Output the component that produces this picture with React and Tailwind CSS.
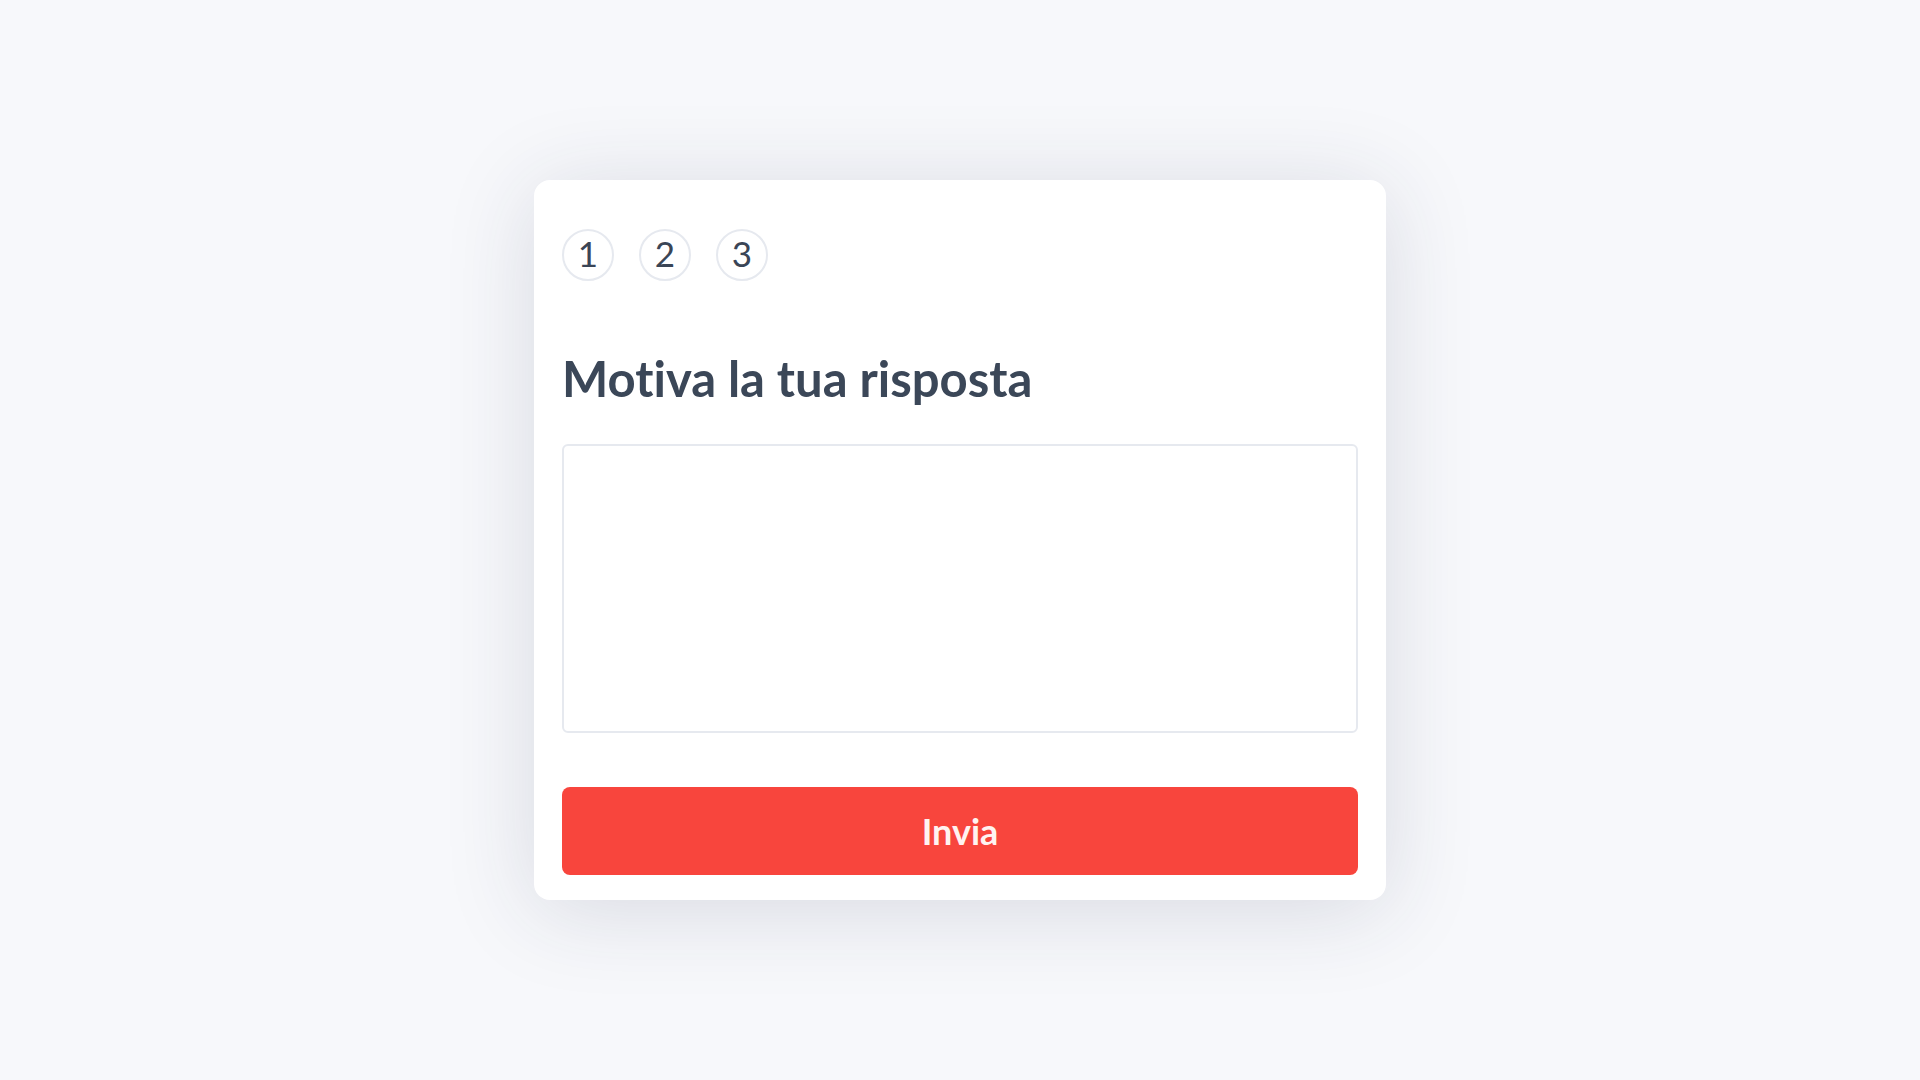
import React, { useState } from "react";

const STEPS = [1, 2, 3];

const App = () => {
  const [answer, setAnswer] = useState("");

  return (
    <div
      className="min-h-screen w-full flex items-center justify-center bg-[#f7f8fb] [font-variant-ligatures:none]"
      style={{ fontFamily: "Lato, 'Open Sans', sans-serif" }}
    >
      <div className="w-[852px] bg-white rounded-[16px] shadow-[0_10px_90px_rgba(40,50,80,0.15)] pt-[49px] px-7 pb-[25px] flex flex-col">
        <div className="flex gap-[25px]">
          {STEPS.map((n) => (
            <div
              key={n}
              className="w-[52px] h-[52px] rounded-full border-2 border-[#e6e9ef] flex items-center justify-center text-[35px] font-normal text-[#3a4556] leading-none pb-[3px]"
            >
              {n}
            </div>
          ))}
        </div>

        <h1 className="mt-[67px] text-[49px] leading-[60px] font-bold text-[#3b4758]">
          Motiva la tua risposta
        </h1>

        <textarea
          value={answer}
          onChange={(e) => setAnswer(e.target.value)}
          className="mt-[36px] h-[289px] w-full resize-none rounded-[6px] border-2 border-[#e6e9ef] p-4 text-xl text-[#3b4758] outline-none"
        />

        <button className="mt-[54px] h-[88px] w-full rounded-[8px] bg-[#f8453d] text-[#fff3f1] text-[36px] font-bold">
          Invia
        </button>
      </div>
    </div>
  );
};

export default App;
